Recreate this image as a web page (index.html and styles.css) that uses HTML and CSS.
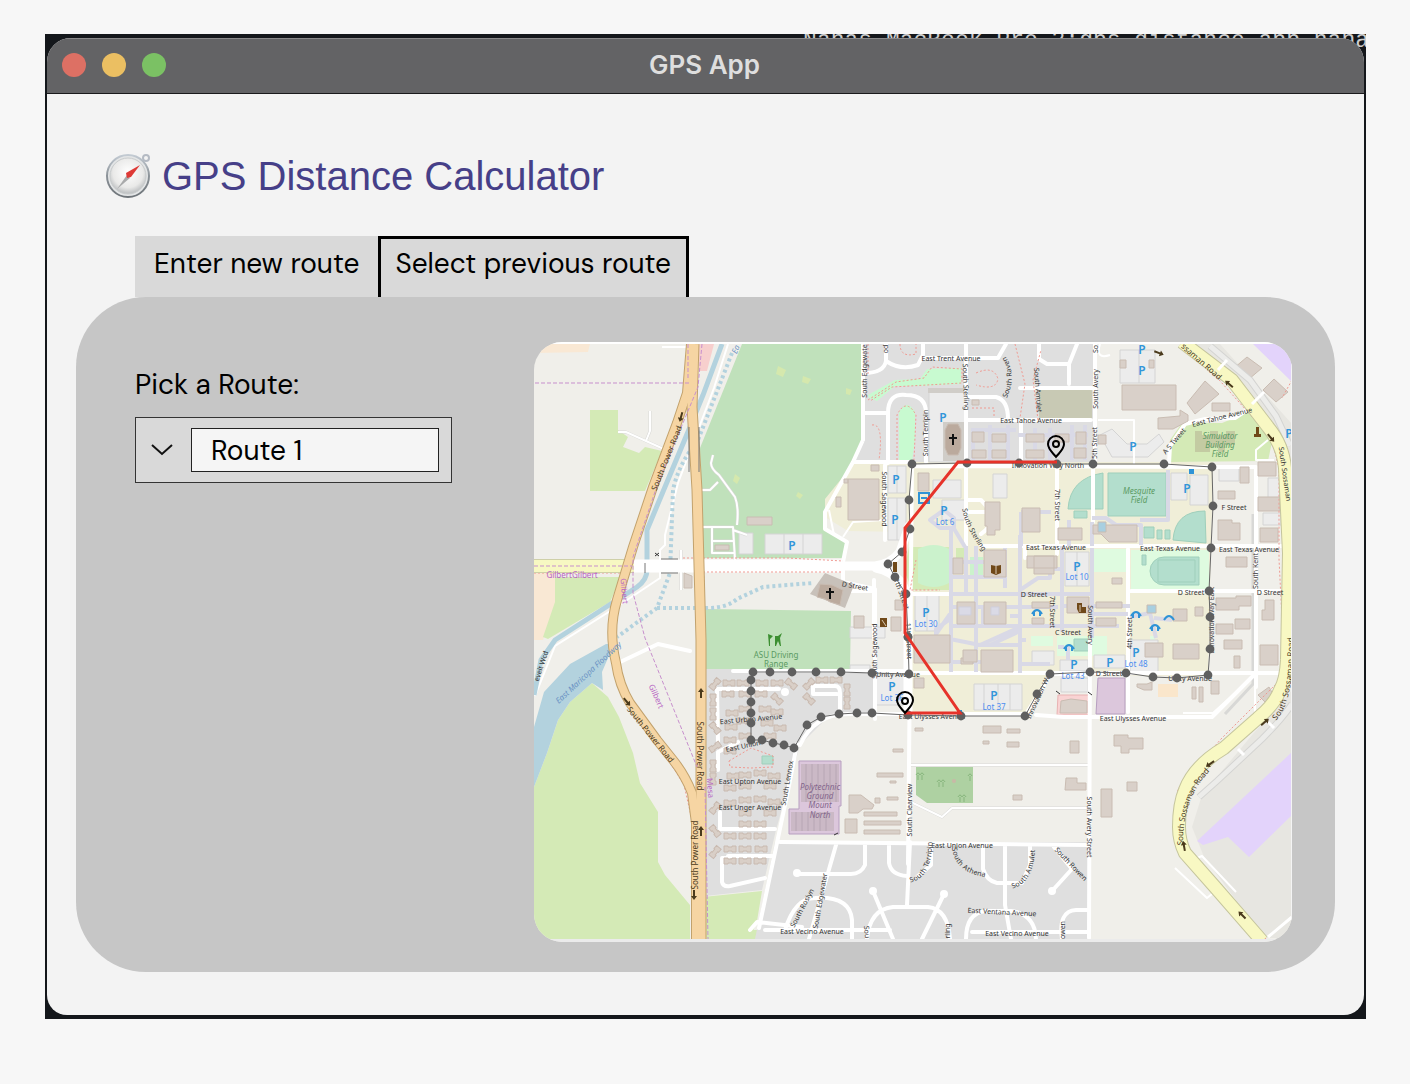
FILE: index.html
```html
<!DOCTYPE html>
<html lang="en">
<head>
<meta charset="utf-8">
<meta name="viewport" content="width=device-width, initial-scale=1">
<title>GPS App</title>
<link rel="stylesheet" href="styles.css">
</head>
<body>
<div class="desktop">
  <div class="terminal" aria-hidden="true">Nanas-MacBook-Pro-2:gps_distance_app nana</div>
  <div class="window">
    <header class="titlebar">
      <div class="lights">
        <button class="light light-close" type="button" aria-label="Close"></button>
        <button class="light light-min" type="button" aria-label="Minimize"></button>
        <button class="light light-max" type="button" aria-label="Zoom"></button>
      </div>
      <span class="titlebar-text">GPS App</span>
    </header>
    <main class="content">
      <h1 class="heading">
        <svg class="compass" viewBox="0 0 46 46" aria-hidden="true">
          <defs>
            <linearGradient id="rim" x1="0" y1="0" x2="0" y2="1"><stop offset="0" stop-color="#c3cbd3"/><stop offset=".5" stop-color="#8b9298"/><stop offset="1" stop-color="#6e7479"/></linearGradient>
            <radialGradient id="face" cx=".5" cy=".4" r=".6"><stop offset="0" stop-color="#fff"/><stop offset=".7" stop-color="#e9e9e8"/><stop offset="1" stop-color="#b9bcbe"/></radialGradient>
          </defs>
          <circle cx="41" cy="5" r="3" fill="none" stroke="#b4bac3" stroke-width="2"/>
          <circle cx="23" cy="23" r="21" fill="#e3e5e6" stroke="url(#rim)" stroke-width="2"/>
          <circle cx="23" cy="23" r="18" fill="url(#face)" stroke="#c9cccd"/>
          <path d="M12 36L22 22l3 3z" fill="#a9aaab"/>
          <path d="M35 12L21 20l1 5 4-1z" fill="#de3a36"/>
        </svg>
        GPS Distance Calculator
      </h1>
      <div class="tabs" role="tablist">
        <button class="tab" type="button" role="tab" aria-selected="false">Enter new route</button>
        <button class="tab tab-active" type="button" role="tab" aria-selected="true">Select previous route</button>
      </div>
      <section class="panel">
        <div class="picker">
          <label class="picker-label" for="route">Pick a Route:</label>
          <div class="picker-box">
            <svg class="chevron" viewBox="0 0 22 12" aria-hidden="true"><path d="M1 1l10 9L21 1" fill="none" stroke="#111" stroke-width="2"/></svg>
            <select class="picker-select" id="route"><option>Route 1</option><option>Route 2</option></select>
          </div>
        </div>
        <svg class="map" viewBox="534 342 758 600" role="img" aria-label="Route map">
          <defs>
            <path id="h" d="M-6 -3h4v1h4v-1h4v6h-4v-1h-4v1h-4z"/>
            <path id="arrow" d="M-5 -1h6v-2l4 3-4 3v-2h-6z"/>
            <path id="pin" d="M0 10C-4 5-8 2-8-3a8 8 0 0 1 16 0C8 2 4 5 0 10z"/>
            <path id="curve-sossaman" d="M1179 846Q1178 798 1207 768"/>
            <path id="curve-sossaman-east" d="M1272 719Q1291 700 1289 636"/>
            <path id="curve-terripin" d="M908 880Q930 876 929 840"/>
            <path id="curve-athena" d="M955 847Q957 870 986 874"/>
            <path id="curve-raven" d="M1003 399Q1015 376 1002 356"/>
            <path id="curve-amulet" d="M1010 886Q1031 882 1032 848"/>
            <path id="curve-sterling" d="M965 507Q967 525 986 551"/>
            <marker id="dot" markerUnits="userSpaceOnUse" markerWidth="10" markerHeight="10" refX="5" refY="5"><circle cx="5" cy="5" r="4.4" fill="#5f5f5f"/></marker>
          </defs>
          <rect x="534" y="342" width="758" height="600" fill="#f0efea"/>

          <!-- land use -->
          <path fill="#f9e8d4" d="M534 344h56l-2 8-54 1zM534 573h21v32l-12 35h-9z"/>
          <path fill="#d4eab6" d="M590 410h28v20l10 7-5 10 16 6 6-6 17 4-17 40h-55zM555 577h66l-11 25-62 37-5-2 12-35zM534 787l13-34 11-33 12-18 22-19 16 14 11 20 14 36 7 30 18 29v50l7 13 25 30v34H534zM703 897l59-6-5 30-7 18h-47zM750 930h22l-5 9h-17z"/>
          <path fill="#c0e1bb" d="M742 344h122l-1 96-10 20-28 50v18l22 13-4 17H702l-2-110zM705 609l146 2-1 58H705z"/>
          <path fill="#d5e8ad" d="M778 366l8 4-3 7-7-3zM803 376l8 3-3 5-6-2zM735 474l5 4-3 6-4-3zM798 492l5 3-3 4-4-3zM846 388l6 2-2 5-4-1z"/>
          <path fill="#f7cfcd" d="M699 344h15l-7 27h-8z"/>
          <path fill="#dfdfdf" d="M864 344h231v118H853l10-22zM705 669h170v44l-45 2-30 30-24 85-14 60-57 6zM775 842h313v97H755z"/>
          <path fill="#f0eed8" d="M855 462h358l-5 214-158-1-24 39H909v-62l-4-52 4-80-4 12-57-1-23-14v-18z"/>
          <path fill="#d4eab6" d="M1170 462v-22l12-17 40 0 32-13 20 22-6 29zM909 547h41v43h-38l-8-20zM956 548h10v10h-10z"/>
          <path fill="#e7e6e1" d="M1190 344l30 0 72 80v40l-7-25-40-50zM1292 690l-40 45-50 60-10 32 12 30 60 81h28z"/>
          <path fill="#e3d3fb" d="M1253 344h39v38zM1197 841l95-89v63l-43 42-21-20-25 8z"/>
          <path fill="#c8fad0" d="M868 395l27-15 25-1 7-10 34-1v16l-40 2-26 0-18 15-8-3zM899 412q8-14 16 0v27l-3 22h-13z"/>
          <path fill="#cbf2cc" d="M918 549q16-8 31 0v34q-15 8-31 0zM970 557h13v19h-13z"/>
          <path fill="#dffbe0" d="M1094 549h33v23h-33zM1131 550h78v40h-78zM1031 636h22v10h-22zM1057 636h50v20h-50zM1150 636h5v20h-5z"/>
          <path fill="#c8c9b4" d="M1039 388h53v31h-53z"/>
          <path fill="#aed1a2" d="M916 767h57v36h-46l-11-8z"/>
          <path fill="#b3decd" stroke="#9fcfbb" d="M1103 473v36h-35q2-31 35-36zM1108 473h58v43h-58zM1074 511h13v7h-13zM1205 511q-30 0-32 29l33 3zM1164 557h35v28h-35a14 14 0 0 1 0-28zM1144 527h10v11h-10zM1157 530h5v9h-5zM1165 530h5v9h-5zM1142 555h4v10h-4zM762 756h11v8h-11zM1074 639h16v12h-16z"/>
          <path fill="none" stroke="#9fcfbb" d="M1158 560h37v22h-37z"/>
          <path fill="#dcc7dc" stroke="#b79fc0" d="M799 761h42v45h-2v28h-50v-25h10zM1098 678h27v36h-29z"/>
          <path fill="#f9d3d3" stroke="#e9b2b2" d="M1058 695h31v20h-32z"/>
          <path fill="#fae6cb" d="M1158 684h20v13h-20z"/>
          <path fill="#cbb9c6" d="M801 764h38v38h-38zM791 812h43v19h-43z"/>
          <path stroke="#b7a6b4" fill="none" d="M806 764v38M812 764v38M818 764v38M824 764v38M830 764v38M836 764v38M796 812v19M802 812v19M808 812v19M814 812v19M820 812v19M826 812v19"/>

          <!-- water -->
          <path fill="#b3d2de" d="M534 787l13-34 11-33 12-18 22-19 11 7-1-18 12-28-8 0-36 20-26 28-10 35z"/>
          <g fill="none">
            <path stroke="#fff" stroke-width="2" d="M728 344l-14 44-36 95-13 52v10l-5 5v28l-45 30-60 38-20 50"/>
            <path stroke="#b3d2de" stroke-width="5" d="M722 344l-19 51-13 32-43 103v40q0 10-10 17l-20 13-62 40-14 20-7 35"/>
            <path stroke="#b3d2de" stroke-width="4" stroke-dasharray="3 3" d="M732 353l-34 87q-20 25-25 50l-3 83-13 35-40 29M657 608h50q20 0 30-9l26-12 50-4"/>
          </g>

          <!-- parking -->
          <path fill="#ececec" stroke="#d4d4d4" d="M929 391h36v71h-36zM888 466h18v27h-18zM888 498h18v42h-18zM933 480h28v18h-28zM942 500h25v20h-25zM765 534h57v20h-57zM739 533h14v21h-14zM915 595h24v36h-24zM1065 552h24v34h-24zM974 684h48v26h-48zM876 675h30v30h-30zM1171 473h16v27h-16zM1190 475h18v30h-18zM1120 350h35v33h-35zM1032 651h22v14h-22zM1060 660h28v11h-28zM1094 655h31v13h-31zM1130 640h28v32h-28zM1061 678h27v14h-27zM1100 435l12-6 15 15h20l12-10 5 8-16 15h-36zM1219 467h20v14h-20zM1268 478h12v20h-12zM1263 513h18v12h-18zM993 474h14v24h-14zM850 627h35v11h-35zM850 665h20v8h-20z"/>
          <path fill="none" stroke="#d4d4d4" d="M897 466v27M897 498v42M927 595v36M784 534v20M803 534v20M984 684v26M998 684v26M1010 684v26M1077 552v34M1139 350v33"/>
          <path fill="#d0cdc8" d="M928 388h37v5h-37zM943 422h22v39h-22z"/>

          <!-- side roads -->
          <g fill="none" stroke="#d8d8d6" stroke-width="3" stroke-linejoin="round">
            <path d="M618 432l8 0 40 18M650 411v20l-4 10M713 455l-2 8q0 6 8 12l16 22q4 10 2 28M700 490h10l8-8M702 527h31l2 33M712 527v26h22M712 541h22M733 530l14 5M681 550v40M911 765h178M911 802l31 15 10-9h137M1225 714l28-30v-170"/>
          </g>
          <g fill="none" stroke="#fff" stroke-width="2" stroke-linejoin="round">
            <path d="M618 432l8 0 40 18M650 411v20l-4 10M713 455l-2 8q0 6 8 12l16 22q4 10 2 28M700 490h10l8-8M702 527h31l2 33M712 527v26h22M712 541h22M733 530l14 5M681 550v40M662 347h28M911 765h178M911 802l31 15 10-9h137M1183 713l30 0 42-38v40M829 510l5 25M843 537l10-15 30-2M1098 420h36v44M1110 355q-15 5-10-11M1268 440l-12 10v10l18 0M1175 868l32 30 5-4M1197 858l5-2 34 36"/>
          </g>
          <g fill="none" stroke="#fff" stroke-width="4" stroke-linecap="round" stroke-linejoin="round">
            <path d="M863 440v-96M863 440l-10 22-28 50v17l22 13-4 20v20l32 7v130M864 413h24v50M888 413q0-20 18-18 20 0 20 18v49M864 373q20 0 22-12v-17M886 361q15 10 32 4l5-10v-11M923 358h75l8-14M966 344v205M966 397h30q12 3 12 22M966 420h125M1039 344v15l8 5h22l8-20M1069 364v20M1020 388h72M1095 344v118M1021 420v42M855 462h58M885 465v75M913 466l300 1h43v220M912 464l-4 400M966 463l50 0M966 512h25M967 500l14 0q20 20 0 34M1057 464v90M981 546h311M1128 549v163M911 594h40M1131 591h161M850 591l24 0M909 673h378M733 671h175M875 640v75M800 745q15-32 50-31h175M1036 715l28 2h148l42-42M1026 714l25-40M1090 640l-1 298M1093 462v60M1050 674h40M1025 546v12M1169 464l1-18 15-22 20-5 30-1 15-10M718 742l-1-53h62M718 770v-18l20-10M720 812v17h55M728 858h-6v24q1 5 8 4l35-8M728 856h44M797 744l-8 42-30 142M780 842l308 3M910 842l-3 63M865 845v20q-4 9-14 9h-54M836 845l-27 94M889 845v18q2 12 18 13M931 845v20l-14 12M867 939q3-30 26-32h35q20 2 22 32M873 891l20 48M944 894l-22 45M983 845v24q4 12 14 14h25M1005 845v60l6 34M1030 845v20l-8 18M966 939q0-26 20-28h25q24 3 25 28M765 930h125M785 930q10-32 30-32 35-2 37 22v19M972 932h116M1052 891l20-22-18-22M1062 939q-4-28 14-29h12M874 580v60M813 686h22q5 0 5 7v20M813 686v8h24M616 664l42-20 32 7M750 930l7-8 45 5"/>
            <circle cx="797" cy="873" r="2" fill="#fff"/><circle cx="873" cy="891" r="2" fill="#fff"/><circle cx="944" cy="894" r="2" fill="#fff"/><circle cx="1052" cy="891" r="2" fill="#fff"/><circle cx="785" cy="692" r="2" fill="#fff"/>
            <path stroke-width="13" stroke-linecap="butt" d="M632 566h211"/>
            <path stroke-width="9" d="M843 566h32q16-2 25-14l9-26M876 568q15 3 26 15l6 14v116"/>
          </g>

          <!-- campus walkways -->
          <path fill="none" stroke="#d9d9e6" stroke-width="4" stroke-linejoin="round" d="M951 530v142M966 546v48M976 546v126M1005 548v40M1020 535v138M951 594h140M951 577h52M953 562h50M951 626h100M965 547l-12-20M950 607h108M983 606v20M936 634l14-20M940 637l40 8 40-18M976 645h44M990 645l30-14M936 638v-9l14-10M1062 546v86M1092 548v90M1020 590l18-12h12v-9h14M1051 626h68M1060 606h70M1010 616h10M1092 614h36M1130 617l20-4 6 25M1154 618l18 2M1092 522v24M1092 518h14l10 7h25v20M1168 470v50h-28M1068 660v-15M1058 647h6M1021 512h30M1021 512v34M1069 520v26M951 662h30M1020 664h30M1020 640h6M971 430h45M973 430v30M990 425v35M1008 425v35M1018 435h70M1035 428v32M1050 428v32M1072 425v35M1085 425v35M930 520l14-10 10 8v10h-14z"/>

          <!-- buildings -->
          <g fill="#d9d0c9" stroke="#c9bcb2" stroke-width="1">
            <path d="M848 479h31v41h-31zM871 465h8v6h-8zM836 497h5v10h-5zM844 479h4v4h-4zM747 517h25v8h-25zM715 545h14v5h-14zM684 573l8 3v12h-8zM918 473h11v18h-11zM985 502h15v28h-5v5h-8v-9h-2zM1022 508h18v24h-18zM972 400h7v5h-7zM854 616h10v12h-10zM895 600h8v10h-8zM891 617h10v14h-10z"/>
            <path d="M1122 385h54v25h-54zM1187 403l18-22 14 13-24 20zM1158 418l22-2v-6l8 5v6l-15 8h-15zM1212 403h18v8h-18zM1234 368l13-11 15 11-13 11zM1263 390l11-11 14 13-12 10zM1120 360h6v8h-6zM1149 360h5v8h-5z"/>
            <path d="M1258 462h18v14h-18zM1258 497h22v14h-22zM1240 467h9v16h-9zM1218 491h17v8h-17zM1218 520h14v3h8v17h-22zM1260 528h18v14h-18zM1226 557h21v10h-21zM1216 598h20v-2h15v10h-12v4h-23zM1265 600h9v20h-12v-10h3zM1216 624h17v10h-17zM1235 619h15v10h-15zM1224 640h18v9h-18zM1234 656h6v12h-6zM1260 645h18v20h-18zM1258 695l11-8 5 9-7 8zM1137 684h10l5-2v8h-8l-7-3zM1211 681h8v13h-8zM1192 687h4v12h-4zM1199 687h4v15h-4zM1173 644h26v15h-26zM1145 643h18v14h-18zM1173 609h14v12h-14zM1195 607h8v9h-8zM1114 735h14v3h15v11h-14v4h-8v-7h-7zM1070 741h9v12h-9zM1066 778h11v5h9v7h-21zM1127 782h10v9h-10zM1101 789h11v28h-11zM1061 701l10-2 16 2v12h-27z"/>
            <path d="M983 726h18v7h-18zM1007 729h13v4h-13zM983 741h6v3h-6zM1007 742h12v5h-12zM915 728h8v3h-8zM893 749h10v3h-10zM877 773h26v4h-26zM890 781h6v2h-6zM849 795h12l13 10-2 4h-9l-5 4h-9zM875 798h5v5h-5zM864 812h33v4h-33zM864 821h37v4h-37zM864 830h36v4h-36zM845 819h12v14h-12zM887 797h11v3h-11zM1013 795h9v5h-9zM914 678h10v10h-10zM961 658h12v6h-12z"/>
            <path d="M914 635h36v28h-36zM981 650h32v22h-32zM963 650h14v12h-14zM1032 602h18v6h-18zM1032 618h12v6h-12zM953 558h10v16h-10zM984 550h22v27h-22zM1027 556h30v12h-30zM957 602h18v22h-18zM984 602h22v22h-22zM1034 556h20v18h-20zM1067 597h22v16h-22zM1096 602h26v6h-26zM1096 618h20v8h-20zM1112 578h10v6h-10zM1093 525h44v17h-28l-8-8h-8zM1058 528h24v12h-24zM972 432h12v10h-12zM992 434h14v8h-14zM1026 434h18v8h-18zM1055 434h14v8h-14zM1076 432h10v12h-10zM972 450h14v8h-14zM992 450h14v8h-14zM1026 450h18v8h-18zM1074 448h12v10h-12zM1098 435h8v9h-8z"/>
            <path fill="#dadae6" stroke="#cfcfdc" d="M959 607h12v8h-12zM991 607h8v8h-8z"/>
            <path stroke="none" fill="#c3cba2" d="M1195 431h7v4h8v-4h8v4h8v-4h9v14h-10v7h-7v-5h-8v5h-15z"/>
            <path fill="#bbaa9d" d="M948 424h10l3 6v18l-3 7h-10l-3-7v-18z"/>
            <path fill="#c8c1ba" stroke="none" d="M825 573l29 12-9 23-35-14z"/>
            <path fill="#bbaa9d" d="M820 584l12 1 11 5-3 15-10-3-5-3-8-2z"/>
            <path fill="#a8cfe0" d="M1147 605h9v8h-9zM1098 522h8v10h-8z"/>
          </g>
          <g fill="#d9cfc7" stroke="#c9bab0">
            <use href="#h" x="729" y="683"/><use href="#h" x="743" y="683"/><use href="#h" x="762" y="683"/><use href="#h" x="777" y="683"/><use href="#h" x="728" y="694"/><use href="#h" x="745" y="694"/><use href="#h" x="761" y="694"/>
            <use href="#h" x="732" y="713"/><use href="#h" x="745" y="709"/><use href="#h" x="765" y="709"/><use href="#h" x="777" y="712"/><use href="#h" x="731" y="727"/><use href="#h" x="743" y="721"/><use href="#h" x="767" y="723"/><use href="#h" x="780" y="728"/>
            <use href="#h" x="730" y="740"/><use href="#h" x="745" y="736"/><use href="#h" x="770" y="736"/><use href="#h" x="730" y="751"/><use href="#h" x="733" y="776"/><use href="#h" x="745" y="775"/><use href="#h" x="760" y="773"/><use href="#h" x="774" y="776"/><use href="#h" x="730" y="788"/><use href="#h" x="745" y="786"/><use href="#h" x="770" y="786"/>
            <use href="#h" x="730" y="803"/><use href="#h" x="745" y="800"/><use href="#h" x="760" y="799"/><use href="#h" x="774" y="802"/><use href="#h" x="745" y="813"/><use href="#h" x="770" y="813"/><use href="#h" x="745" y="824"/><use href="#h" x="760" y="824"/><use href="#h" x="730" y="836"/><use href="#h" x="745" y="836"/><use href="#h" x="760" y="836"/>
            <use href="#h" x="730" y="849"/><use href="#h" x="745" y="849"/><use href="#h" x="761" y="849"/><use href="#h" x="730" y="861"/><use href="#h" x="745" y="861"/><use href="#h" x="760" y="861"/><use href="#h" x="822" y="680"/><use href="#h" x="836" y="680"/>
            <use href="#h" transform="translate(715 684) rotate(-50)"/><use href="#h" transform="translate(713 700) rotate(90)"/><use href="#h" transform="translate(713 714) rotate(90)"/><use href="#h" transform="translate(715 728) rotate(50)"/><use href="#h" transform="translate(715 747) rotate(-35)"/><use href="#h" transform="translate(713 766) rotate(90)"/><use href="#h" transform="translate(713 779) rotate(90)"/><use href="#h" transform="translate(715 808) rotate(-50)"/><use href="#h" transform="translate(715 831) rotate(50)"/><use href="#h" transform="translate(715 852) rotate(-50)"/>
            <use href="#h" transform="translate(777 699) rotate(45)"/><use href="#h" transform="translate(791 684) rotate(40)"/><use href="#h" transform="translate(809 684) rotate(-45)"/><use href="#h" transform="translate(809 699) rotate(45)"/><use href="#h" transform="translate(847 690) rotate(90)"/><use href="#h" transform="translate(847 703) rotate(90)"/>
          </g>
          <g fill="none" stroke="#ef9a92" stroke-width="1" stroke-dasharray="2 2">
            <path d="M534 573h90M683 558h105l55 3M703 572h140M700 492l4 90M868 400l28-18 28-4 8-11 30 2v14l-70 4-22 14M872 425q12-2 7 35M897 460V415q9-18 19 0l-2 45M868 344v30M900 344q0 14 16 10v-10M976 373q18-8 22 6-2 12-22 6M1015 344l10 40-5 34M1038 420l-5-40 8-30M972 408h22v10M729 761l22-13 22 8v11l-22 1-21-1zM1187 344l85 95 7 30v90l4 80-2 40-60 60-43 50-2 25 8 35 82 90M916 560l-6 30h30M609 640l5 25 15 38 30 42 25 40 8 35v118M1292 380l-10 18"/>
          </g>

          <!-- main roads -->
          <g fill="none">
            <path stroke="#cfd0a8" stroke-width="14" d="M534 566h100"/>
            <path stroke="#f7f8c2" stroke-width="12" d="M534 566h100"/>
            <path stroke="#d4d4d2" stroke-width="7" d="M1210 346l40 34 26 36 14 30M1292 704q-10 15-30 35l-45 42-18 16"/>
            <path stroke="#ececea" stroke-width="5" d="M1210 346l40 34 26 36 14 30M1292 704q-10 15-30 35l-45 42-18 16"/>
            <path stroke="#c5c59d" stroke-width="14" d="M1182 342l50 38 36 47q15 18 17 41l4 85-2 107q-1 20-7 30-5 14-22 28l-34 30q-30 18-39 42-6 14-6 37 0 14 6 26l30 34 47 54"/>
            <path stroke="#f8f8c3" stroke-width="12" d="M1182 342l50 38 36 47q15 18 17 41l4 85-2 107q-1 20-7 30-5 14-22 28l-34 30q-30 18-39 42-6 14-6 37 0 14 6 26l30 34 47 54"/>
            <path stroke="#fff" stroke-width="3" d="M1268 937l24-20M1218 370l9-10M1252 404l12-12M1238 749l6 6M1268 722l6 6"/>
            <g stroke="#c2a26d" stroke-width="10"><path d="M691 344l-4 49-10 30-24 64-20 60-16 53q-9 30-1 63 3 22 14 40l27 37 16 20q12 15 19 33l4 30v116"/><path d="M694 344l-2 63 5 83 4 150v299" stroke-width="11"/></g>
            <g stroke="#f6d5a3" stroke-width="8"><path d="M691 344l-4 49-10 30-24 64-20 60-16 53q-9 30-1 63 3 22 14 40l27 37 16 20q12 15 19 33l4 30v116"/><path d="M694 344l-2 63 5 83 4 150v299" stroke-width="9"/></g>
            <path stroke="#c78fcd" stroke-dasharray="4 2" d="M535 383h155M702 344l-4 43-15 36-25 60-25 74v36l12 45 52 129M705 787l3 152M534 566h98M688 344v35"/>
            <path stroke="#777" d="M689 427v45M699 427v45M661 559h17M661 573h17M645 563v10"/>
          </g>

          <!-- facility marks -->
          <path fill="none" stroke="#2f93d6" stroke-width="2" d="M919 493h10v10h-10zM921 498h6M1032 614q5-8 10 0M1064 649q5-8 10 0M1131 616q5-8 10 0M1150 629q5-8 10 0M1164 620q5-8 10 0M1034 611v5M1040 611v5M1066 646v5M1072 646v5M1133 613v5M1139 613v5M1152 626v5M1158 626v5"/>
          <path fill="#2f93d6" d="M1189 469h5v5h-5zM957 710h5v5h-5z"/>
          <path fill="#704919" d="M991 565l5 1 5-1v8l-5 2-5-2zM1077 603h5v4h4v6h-7l-2-4zM880 618h7v9h-7zM1256 427h3v7h2v3h-7v-3h2zM893 562h4v10h-4z"/>
          <path fill="none" stroke="#d9c9b4" d="M996 566v8M1080 605v7M882 620l4 6"/>
          <path fill="#3c8f31" d="M768 634l5 2-3 3v7h-1zM775 636h3l4-3-2 5 1 8h-1l-2-5-2 5h-1z"/>
          <path stroke="#111" stroke-width="2" fill="none" d="M953 434v11M949 438h8M830 588v11M826 592h8"/>
          <path fill="none" stroke="#86b57c" d="M918 780v-5M922 780v-5M916 775q2-4 4 0 2-4 4 0M939 787v-5M943 787v-5M937 782q2-4 4 0 2-4 4 0M970 781v-5M968 776q2-4 4 0M960 802v-5M964 802v-5M958 797q2-4 4 0 2-4 4 0"/>
          <circle cx="954" cy="781" r="2" fill="#c8b9a6"/>

          <!-- map labels -->
          <g class="street">
            <text x="951" y="358">East Trent Avenue</text><text x="1031" y="420">East Tahoe Avenue</text><text x="1056" y="547">East Texas Avenue</text><text x="1170" y="548">East Texas Avenue</text><text x="1249" y="549">East Texas Avenue</text>
            <text x="1048" y="465">Innovation Way North</text><text x="1234" y="507">F Street</text><text x="1191" y="592">D Street</text><text x="1270" y="592">D Street</text><text x="1034" y="594">D Street</text><text x="1068" y="632">C Street</text><text x="1109" y="673">D Street</text><text x="1190" y="678">Unity Avenue</text><text x="898" y="674">Unity Avenue</text><text x="932" y="716">East Ulysses Avenue</text><text x="1133" y="718">East Ulysses Avenue</text>
            <text x="962" y="845">East Union Avenue</text><text x="812" y="931">East Vecino Avenue</text><text x="1017" y="933">East Vecino Avenue</text><text transform="translate(1002 912) rotate(3)">East Ventana Avenue</text>
            <text transform="translate(855 586) rotate(10)">D Street</text><text transform="translate(1222 417) rotate(-14)">East Tahoe Avenue</text><text transform="translate(1174 441) rotate(-50)">A S Tweet</text>
            <text transform="translate(864 371) rotate(-90)">South Edgewate</text><text transform="translate(885 349) rotate(-90)">od</text><text transform="translate(925 433) rotate(-90)">South Terripin</text><text transform="translate(966 387) rotate(88)">South Sterling</text><text><textPath href="#curve-raven" startOffset="50%">South Raven</textPath></text><text transform="translate(1038 390) rotate(86)">South Amulet</text><text transform="translate(1095 389) rotate(-90)">South Avery</text><text transform="translate(1095 349) rotate(-90)">So</text><text transform="translate(1094 443) rotate(-90)">5th Street</text>
            <text transform="translate(884 499) rotate(90)">South Sagewood</text><text><textPath href="#curve-sterling" startOffset="50%">South Sterling</textPath></text><text transform="translate(1057 505) rotate(90)">7th Street</text><text transform="translate(1052 612) rotate(90)">7th Street</text><text transform="translate(1090 625) rotate(90)">South Avery</text><text transform="translate(1129 633) rotate(-90)">4th Street</text><text transform="translate(1211 620) rotate(-90)">Innovation Way East</text><text transform="translate(1255 571) rotate(-90)">South Kent</text>
            <text transform="translate(901 592) rotate(70)">11th Street</text><text transform="translate(909 641) rotate(88)">11th Street</text><text transform="translate(874 651) rotate(-90)">South Sagewood</text><text transform="translate(1039 695) rotate(-65)">Innovation Way</text>
            <text transform="translate(751 719) rotate(-5)">East Urban Avenue</text><text transform="translate(743 746) rotate(-12)">East Union</text><text x="750" y="781">East Upton Avenue</text><text x="750" y="807">East Unger Avenue</text><text transform="translate(787 783) rotate(-80)">South Lennox</text><text transform="translate(909 810) rotate(-90)">South Clearview</text><text transform="translate(1089 827) rotate(90)">South Avery Street</text>
            <text><textPath href="#curve-terripin" startOffset="50%">South Terripin</textPath></text><text><textPath href="#curve-athena" startOffset="50%">South Athena</textPath></text><text><textPath href="#curve-amulet" startOffset="50%">South Amulet</textPath></text><text transform="translate(1071 864) rotate(46)">South Rowen</text><text transform="translate(802 908) rotate(-62)">South Roslyn</text><text transform="translate(820 901) rotate(-80)">South Edgewater</text><text transform="translate(867 932) rotate(85)">Sou</text><text transform="translate(947 931) rotate(-90)">rling</text><text transform="translate(1062 930) rotate(-90)">owen</text><text transform="translate(541 666) rotate(-72)">evelt Wcd</text><text transform="translate(1285 474) rotate(82)">South Sossaman</text>
          </g>
          <g class="road">
            <text transform="translate(666 458) rotate(-68)">South Power Road</text><text transform="translate(651 734) rotate(51)">South Power Road</text><text transform="translate(700 756) rotate(90)">South Power Road</text><text transform="translate(694 855) rotate(-90)">South Power Road</text><text transform="translate(1202 361) rotate(41)">ssaman Road</text><text><textPath href="#curve-sossaman-east" startOffset="50%">South Sossaman Road</textPath></text><text><textPath href="#curve-sossaman" startOffset="50%">South Sossaman Road</textPath></text>
          </g>
          <g fill="#4a3a1c">
            <use href="#arrow" transform="translate(681 417) rotate(105)"/><use href="#arrow" transform="translate(701 693) rotate(-90)"/><use href="#arrow" transform="translate(701 831) rotate(-90)"/><use href="#arrow" transform="translate(694 895) rotate(90)"/><use href="#arrow" transform="translate(627 702) rotate(50)"/><use href="#arrow" transform="translate(1229 384) rotate(220)"/><use href="#arrow" transform="translate(1271 438) rotate(50)"/><use href="#arrow" transform="translate(1265 722) rotate(-40)"/><use href="#arrow" transform="translate(1210 764) rotate(145)"/><use href="#arrow" transform="translate(1184 846) rotate(-100)"/><use href="#arrow" transform="translate(1242 915) rotate(225)"/><use href="#arrow" transform="translate(1159 353) rotate(20)"/>
          </g>
          <path fill="none" stroke="#333" d="M655 556l4-3M655 553l4 3M1056 691l4 3M1088 692l4 3M834 835l4-2"/>
          <g class="town"><text x="572" y="574">GilbertGilbert</text><text transform="translate(625 591) rotate(85)">Gilbert</text><text transform="translate(657 696) rotate(66)">Gilbert</text><text transform="translate(711 788) rotate(85)">Mesa</text></g>
          <g class="water"><text transform="translate(588 672) rotate(-43)">East Maricopa Floodway</text><text transform="translate(735 349) rotate(-70)">Ea</text></g>
          <g class="green"><text x="776" y="654">ASU Driving</text><text x="776" y="663">Range</text></g>
          <g class="green italic"><text x="1220" y="435">Simulator</text><text x="1220" y="444">Building</text><text x="1220" y="453">Field</text><text x="1139" y="490">Mesquite</text><text x="1139" y="499">Field</text></g>
          <g class="purple"><text x="820" y="786">Polytechnic</text><text x="820" y="795">Ground</text><text x="820" y="804">Mount</text><text x="820" y="814">North</text></g>
          <g class="lot"><text x="945" y="521">Lot 6</text><text x="926" y="623">Lot 30</text><text x="1077" y="576">Lot 10</text><text x="892" y="697">Lot 36</text><text x="994" y="706">Lot 37</text><text x="1073" y="675">Lot 43</text><text x="1136" y="663">Lot 48</text></g>
          <g class="p"><text x="943" y="417">P</text><text x="896" y="479">P</text><text x="895" y="519">P</text><text x="944" y="510">P</text><text x="792" y="545">P</text><text x="926" y="612">P</text><text x="1077" y="566">P</text><text x="892" y="686">P</text><text x="994" y="695">P</text><text x="1074" y="664">P</text><text x="1110" y="662">P</text><text x="1136" y="652">P</text><text x="1142" y="349">P</text><text x="1142" y="370">P</text><text x="1133" y="446">P</text><text x="1187" y="488">P</text><text x="1289" y="433">P</text></g>

          <!-- recorded track and chosen route -->
          <polyline fill="none" stroke="#666" marker-start="url(#dot)" marker-mid="url(#dot)" marker-end="url(#dot)" points="908,637 906,594 895,577 888,564 902,552 910,529 909,500 912,464 967,463 1019,463 1057,464 1093,464 1164,464 1212,467 1213,506 1211,548 1209,591 1210,617 1210,649 1208,675 1177,678 1153,677 1126,673 1090,672 1050,674 1037,694 1025,716 961,716 908,715 872,713 857,713 839,714 821,717 807,725 794,748 784,745 773,743 762,740 751,740 751,723 751,713 751,702 751,691 751,680 753,672 770,672 792,672 816,672 841,672 872,673 909,674 908,637"/>
          <path fill="none" stroke="#e6332a" stroke-width="3" d="M1057 462H958l-53 66v105l55 80h-56"/>
          <g fill="none" stroke="#000" stroke-width="2">
            <use href="#pin" x="1056" y="447"/><circle cx="1056" cy="444" r="3"/>
            <use href="#pin" x="905" y="703"/><circle cx="905" cy="701" r="3"/>
          </g>
          <path fill="#fff" d="M534 342h758v2H534z"/><path fill="#ebebeb" d="M534 939h758v3H534z"/><path fill="#f4f4f4" d="M1291 342h1v600h-1z"/>
        </svg>
      </section>
    </main>
  </div>
</div>
</body>
</html>
```
FILE: styles.css
```css
* { box-sizing: border-box; }

body {
  margin: 0;
  padding: 34px 44px 65px 45px;
  background: #f7f7f7;
  color: #000;
  font-family: "DM Sans", Inter, "Open Sans", sans-serif;
  font-size: 28px;
}

button, select { font: inherit; color: inherit; }

.desktop {
  position: relative;
  overflow: hidden;
  padding: 4px 2px;
  background: #14171b;
}

.terminal {
  position: absolute;
  top: -6px;
  right: -3px;
  color: #ccc;
  font: 23px/26px "Liberation Mono", monospace;
  white-space: pre;
}

.window {
  position: relative;
  overflow: hidden;
  border-radius: 24px 24px 20px 20px;
  background: #f3f3f3;
}

.titlebar {
  display: grid;
  grid-template-columns: 1fr auto 1fr;
  align-items: center;
  height: 56px;
  padding: 0 17px 3px 15px;
  border-top: 1px solid #8a8a8b;
  border-bottom: 1px solid #1a1a1c;
  background: #636365;
}

.lights { display: flex; gap: 16px; }

.light {
  width: 24px;
  height: 24px;
  padding: 0;
  border: 0;
  border-radius: 50%;
}
.light-close { background: #dd7064; }
.light-min { background: #ebbf62; }
.light-max { background: #7bc164; }

.titlebar-text {
  color: #dedede;
  font: 600 26px/32px Inter, sans-serif;
}

.content { padding: 57px 29px 43px; }

.heading {
  display: flex;
  align-items: center;
  gap: 11px;
  margin: 0;
  padding-left: 29px;
  color: #463f88;
  font: 400 40px/50px "Liberation Sans", Arial, sans-serif;
}
.compass { width: 46px; height: 46px; }

.tabs {
  display: flex;
  margin-top: 35px;
  padding-left: 59px;
}

.tab {
  height: 61px;
  padding: 0 19px 6px;
  border: 0;
  background: #d9d9d9;
}
.tab-active {
  padding: 0 15px 9px 14px;
  border: 3px solid #000;
  border-bottom: 0;
}

.panel {
  display: grid;
  grid-template-columns: 399fr 758fr;
  align-items: start;
  padding: 45px 43px 30px 59px;
  border-radius: 70px;
  background: #c6c6c6;
}

.picker { padding-top: 25px; }

.picker-label {
  display: block;
  line-height: 36px;
}

.picker-box {
  display: flex;
  align-items: center;
  width: 80%;
  max-width: 317px;
  margin-top: 14px;
  padding: 10px 12px 10px 15px;
  border: 1px solid #333;
  background: #d9d9d9;
}

.chevron { flex: none; width: 22px; height: 12px; }

.picker-select {
  flex: 1;
  min-width: 0;
  height: 44px;
  margin-left: 18px;
  padding: 0 19px;
  border: 1px solid #222;
  border-radius: 0;
  background: #f5f5f5;
  appearance: none;
}

.map {
  display: block;
  width: 100%;
  border-radius: 28px;
}

.map text {
  font-family: "Noto Sans", sans-serif;
  font-size: 7px;
  text-anchor: middle;
  dominant-baseline: central;
}
.street text { fill: #333; }
.map .road text { fill: #4a3a1c; font-size: 8px; }
.map .town text { fill: #b765c4; font-size: 8px; }
.map .water text { fill: #6b93c4; font-size: 8px; font-style: italic; }
.map .green text { fill: #5a9a62; font-size: 8px; }
.map .italic text { font-style: italic; }
.map .purple text { fill: #83658b; font-size: 8px; font-style: italic; }
.map .lot text { fill: #4b8df0; font-size: 8px; }
.map .p text { fill: #3296da; font-size: 12px; font-weight: 600; }
```
